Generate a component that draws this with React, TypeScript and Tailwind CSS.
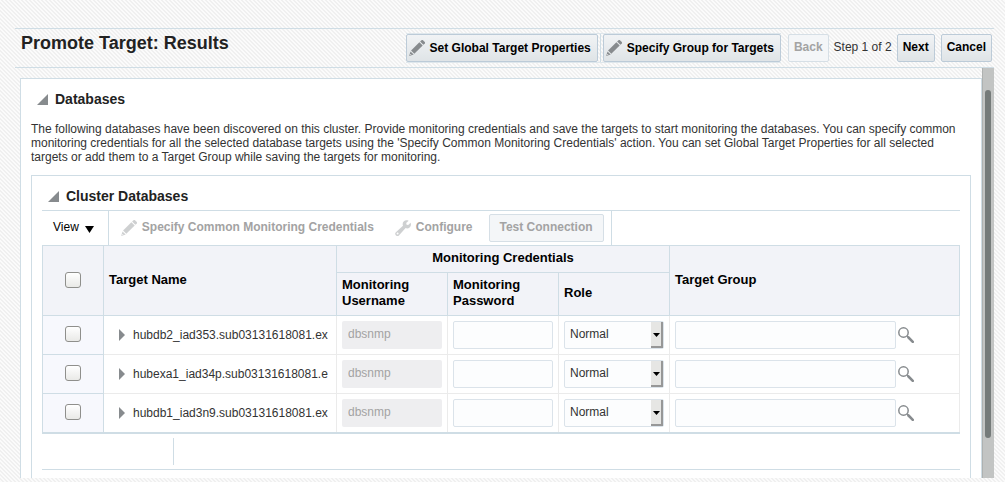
import React from "react";

const databases = [
  { id: "db2", name: "hubdb2_iad353.sub03131618081.ex" },
  { id: "exa1", name: "hubexa1_iad34p.sub03131618081.e" },
  { id: "db1", name: "hubdb1_iad3n9.sub03131618081.ex" },
];

function Pencil() {
  return (
    <svg width="16" height="16" viewBox="0 0 16 16" fill="#878b8e" aria-hidden="true" className="shrink-0">
      <path d="M12.6.2a1 1 0 0 1 1.3 0l1.9 1.9a1 1 0 0 1 0 1.3L14.4 4.8 11.1 1.6z" />
      <path d="M10.4 2.3l3.3 3.3-8.4 8.2-3.2-3.2z" />
      <path d="M1.5 11.4l3.2 3.2L.2 16z" />
      <path d="M1.2 14l1 1" stroke="#f5f6f7" strokeWidth=".8" />
    </svg>
  );
}

function Wrench() {
  return (
    <svg width="16" height="16" viewBox="0 0 16 16" fill="#878b8e" aria-hidden="true" className="shrink-0">
      <path
        fillRule="evenodd"
        d="M13.6.7 11.2 3.1l.4 1.6 1.6.4 2.4-2.3c.8 2 .2 3.700-1 4.700-1.200 1-2.700 1.100-4 .6l-6.500 7.200a2.100 2.100 0 0 1-3.200-3L8 5.700C7.300 4 7.700 2.300 8.900 1.200 10.200 0 12 0 13.600.7zM2.600 12.500a1 1 0 1 0 0 2 1 1 0 0 0 0-2z"
      />
    </svg>
  );
}

function Magnifier() {
  return (
    <svg width="16" height="16" viewBox="0 0 16 16" fill="none" stroke="#878b8e" aria-hidden="true">
      <circle cx="5.500" cy="5.500" r="4.700" strokeWidth="1.500" />
      <path d="M9 9l1.500 1.500" strokeWidth="1.500" />
      <path d="M10.500 10.500l4.300 4.300" strokeWidth="2.600" strokeLinecap="round" />
    </svg>
  );
}

function SectionTitle({ children }: { children: React.ReactNode }) {
  return (
    <h2 className="flex items-center text-[14px] leading-5 font-bold text-[#222]">
      <button type="button" aria-label="Collapse section" className="mr-[7px] ml-[6px]">
        <svg width="11" height="11" viewBox="0 0 11 11" fill="#878b8e">
          <path d="M11 0v11H0z" />
        </svg>
      </button>
      {children}
    </h2>
  );
}

const raised =
  "flex h-7 items-center rounded-[2px] border border-[#bccbd8] bg-linear-to-b from-[#f1f3f5] to-[#dfe4e7] font-bold text-black";
const flat = "h-7 rounded-[2px] border border-[#d6dfe6] bg-[#f4f6f8] pb-[2px] font-bold text-[#a3a3a3]";
const field = "block h-7 rounded-[2px] border border-[#dbe3ea] bg-[#fcfdfe] px-[5px] pb-[2px] text-[#333]";
const head = "border border-[#cfdde5] px-[5px] pb-[2px] text-left text-[13px] leading-4 font-bold text-black";

function Tick({ label }: { label: string }) {
  return (
    <input
      type="checkbox"
      aria-label={label}
      className="mx-auto block size-4 appearance-none rounded-[3px] border border-[#8f8f8c] bg-linear-to-b from-white to-[#e9e9e7]"
    />
  );
}

export default function App() {
  return (
    <div className="flex h-screen flex-col bg-[#fafafa] bg-[linear-gradient(45deg,#f0f0f0_25%,#fbfbfb_25%_50%,#f0f0f0_50%_75%,#fbfbfb_75%)] bg-[size:4px_4px] pt-7 pr-[11px] pb-1 pl-[15px] font-['Liberation_Sans',Arial,sans-serif] text-[12px] leading-[14px] text-[#333]">
      <header className="flex h-10 shrink-0 items-center border-y border-[#cfdde5] pr-[2px] pl-[6px]">
        <h1 className="mb-[10px] flex-1 text-[18px] leading-6 font-bold text-[#222]">Promote Target: Results</h1>
        <div className="flex items-center border-y border-[#dfe7ec]">
          <button type="button" className={raised + " pr-[6px] pl-[2px]"}>
            <Pencil />
            <span className="ml-[5px]">Set Global Target Properties</span>
          </button>
          <span className="mx-[2px] h-7 w-px bg-[#cfdde5]" />
          <button type="button" className={raised + " pr-[6px] pl-[2px]"}>
            <Pencil />
            <span className="ml-[5px]">Specify Group for Targets</span>
          </button>
        </div>
        <button type="button" disabled className={flat + " ml-[7px] px-[5px]"}>Back</button>
        <span className="mx-[5px] pb-[2px]">Step 1 of 2</span>
        <button type="button" className={raised + " px-[5px] pb-[2px]"}>Next</button>
        <button type="button" className={raised + " ml-[6px] px-[5px] pb-[2px]"}>Cancel</button>
      </header>

      <div className="flex min-h-0 flex-1">
        <main className="min-w-0 flex-1 overflow-hidden pt-[10px] pl-[5px]">
          <section className="min-h-full border border-b-0 border-[#cfdde5] bg-white px-[10px] pt-[10px]">
            <SectionTitle>Databases</SectionTitle>
            <p className="mt-[13px]">
              The following databases have been discovered on this cluster. Provide monitoring credentials and save the
              targets to start monitoring the databases. You can specify common monitoring credentials for all the
              selected database targets using the 'Specify Common Monitoring Credentials' action. You can set Global
              Target Properties for all selected targets or add them to a Target Group while saving the targets for
              monitoring.
            </p>

            <section className="mt-[11px] border border-b-0 border-[#cfdde5] px-[10px] pt-[10px] pb-4">
              <SectionTitle>Cluster Databases</SectionTitle>
              <div className="mt-1 flex h-[35px] border-t border-[#cfdde5]">
                <button type="button" className="flex items-center border-r border-[#cfdde5] pr-[14px] pb-[2px] pl-[11px] text-black">
                  View
                  <svg width="9" height="7" viewBox="0 0 9 7" className="mt-1 ml-[6px]">
                    <path d="M0 0h9L4.500 7z" />
                  </svg>
                </button>
                <div className="flex items-center border-r border-[#cfdde5] pr-[7px] pl-3 font-bold text-[#a3a3a3]">
                  <button type="button" disabled className="flex items-center pb-[2px]">
                    <span className="mt-[2px] opacity-40"><Pencil /></span>
                    <span className="ml-[5px]">Specify Common Monitoring Credentials</span>
                  </button>
                  <button type="button" disabled className="ml-[21px] flex items-center pb-[2px]">
                    <span className="mt-[2px] opacity-40"><Wrench /></span>
                    <span className="ml-[5px]">Configure</span>
                  </button>
                  <button type="button" disabled className={flat + " ml-4 px-[10px]"}>Test Connection</button>
                </div>
              </div>

              <table className="w-full table-fixed border-collapse border-r border-b-2 border-[#cfdde5]">
                <colgroup>
                  <col className="w-[61px]" />
                  <col className="w-[233px]" />
                  <col className="w-[111px]" />
                  <col className="w-[111px]" />
                  <col className="w-[111px]" />
                  <col />
                </colgroup>
                <thead className="bg-[#f2f3f8]">
                  <tr className="h-[27px]">
                    <th rowSpan={2} className={head}><Tick label="Select all databases" /></th>
                    <th rowSpan={2} className={head}>Target Name</th>
                    <th colSpan={3} className="border border-[#cfdde5] pb-[2px] text-center text-[13px] leading-4 font-bold text-black">Monitoring Credentials</th>
                    <th rowSpan={2} className={head}>Target Group</th>
                  </tr>
                  <tr className="h-[43px]">
                    <th className={head}>Monitoring Username</th>
                    <th className={head}>Monitoring Password</th>
                    <th className={head}>Role</th>
                  </tr>
                </thead>
                <tbody>
                  {databases.map((db) => (
                    <tr key={db.id} className="h-[39px]">
                      <td className="border border-[#cfdde5] bg-[#f7f8fd] pb-[2px]"><Tick label={"Select " + db.name} /></td>
                      <td className="border border-[#ebebeb] pr-[5px] pl-[15px]">
                        <div className="flex items-center">
                          <button type="button" aria-label="Expand row" className="mr-2 shrink-0">
                            <svg width="6" height="12" viewBox="0 0 6 12" fill="#878b8e"><path d="M0 0l6 6-6 6z" /></svg>
                          </button>
                          <span className="whitespace-nowrap">{db.name}</span>
                        </div>
                      </td>
                      <td className="border border-[#ebebeb] px-[5px]">
                        <input aria-label="Monitoring Username" disabled defaultValue="dbsnmp" className="block h-7 w-full rounded-[2px] bg-[#eeeef0] px-[6px] pb-[2px] text-[#a3a3a3]" />
                      </td>
                      <td className="border border-[#ebebeb] px-[5px]">
                        <input aria-label="Monitoring Password" type="password" className={field + " w-full"} />
                      </td>
                      <td className="border border-[#ebebeb] px-[5px]">
                        <div className="grid">
                          <select aria-label="Role" className={field + " col-start-1 row-start-1 w-full appearance-none"}>
                            <option>Normal</option>
                          </select>
                          <span className="pointer-events-none col-start-1 row-start-1 m-px flex w-3 items-center justify-center justify-self-end border-r-2 border-b-2 border-[#979797] bg-[#e6e6e4] pt-[2px]">
                            <svg width="7" height="4" viewBox="0 0 7 4"><path d="M0 0h7L3.500 4z" /></svg>
                          </span>
                        </div>
                      </td>
                      <td className="border border-[#ebebeb] pl-[5px]">
                        <div className="flex items-center">
                          <input aria-label="Target Group" className={field + " w-[221px]"} />
                          <button type="button" aria-label="Search target group" className="ml-[2px]"><Magnifier /></button>
                        </div>
                      </td>
                    </tr>
                  ))}
                </tbody>
              </table>
              <div className="flex h-9 border-b border-[#cfdde5] pt-1 pb-1">
                <div className="w-[132px] border-r border-[#cfdde5]" />
              </div>
            </section>
          </section>
        </main>
        <div className="w-3 shrink-0 border-l border-[#aeb1b0] bg-[#c2c4c3] pt-[22px] pl-[2px]">
          <div className="h-[348px] w-[6px] rounded-full bg-[#757b7a]" />
        </div>
      </div>
    </div>
  );
}
